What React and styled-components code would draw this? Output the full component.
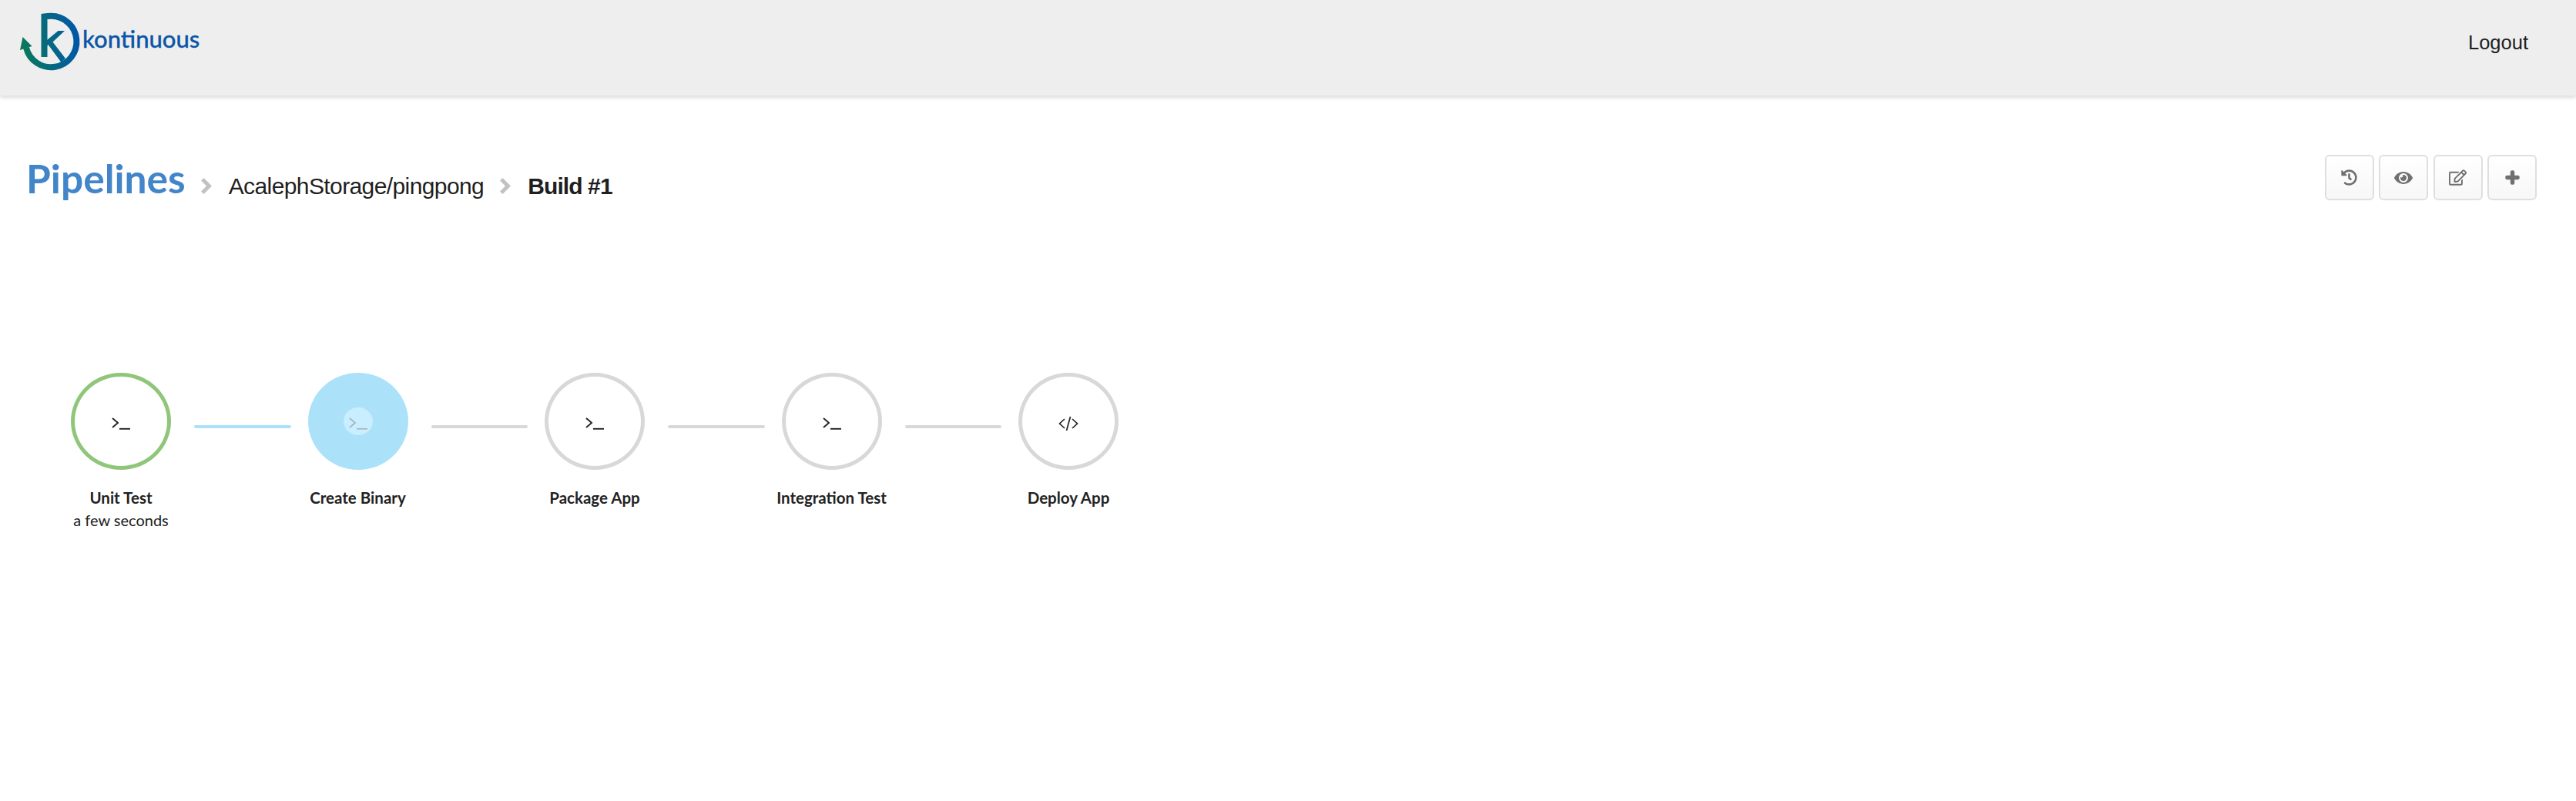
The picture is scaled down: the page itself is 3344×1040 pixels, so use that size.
import React from "react";
import styled, { createGlobalStyle } from "styled-components";
import { FaHistory, FaEye, FaRegEdit, FaPlus } from "react-icons/fa";

const GlobalStyle = createGlobalStyle`
    html, body {
        margin: 0;
        padding: 0;
        background: #fff;
        font-family: "Liberation Sans", Arial, sans-serif;
    }
`;

const Logo = () => (
    <LogoLink>
        <svg width="84" height="80" viewBox="24 14 84 80">
            <defs>
                <linearGradient id="logoFill" gradientUnits="userSpaceOnUse" x1="26" y1="60" x2="103" y2="50">
                    <stop offset="0" stopColor="#0b7a58" />
                    <stop offset="1" stopColor="#0056aa" />
                </linearGradient>
            </defs>
            <path
                d="M57.5 74V21.5C61 21 63 20.8 66 20.8A33.2 33.2 0 1 1 34 62"
                fill="none"
                stroke="url(#logoFill)"
                strokeWidth="8"
            />
            <path d="M29.5 48L26 65L41.5 60Z" fill="url(#logoFill)" />
            <path d="M61 52L75.5 40H84L68.5 54.5L85 76L79.5 81L62.5 58L61 59.5Z" fill="url(#logoFill)" />
        </svg>
        <LogoText>kontinuous</LogoText>
    </LogoLink>
);

const Chevron = () => (
    <ChevronIcon width="14" height="21" viewBox="0 0 14 21">
        <path d="M0 3.5L3.5 0L14 10.5L3.5 21L0 17.5L7 10.5Z" fill="#c2c2c2" />
    </ChevronIcon>
);

const TerminalIcon = ({ color }) => (
    <GlyphIcon width="24" height="16" viewBox="0 0 24 16" fill="none" stroke={color} strokeWidth="1.9">
        <path d="M1 1L8 7L1 13" />
        <path d="M10 14.8H24" />
    </GlyphIcon>
);

const CodeIcon = () => (
    <GlyphIcon width="26" height="20" viewBox="0 0 26 20" fill="none" stroke="#222" strokeWidth="1.7">
        <path d="M8 4L1.5 10L8 16" />
        <path d="M15.5 1L10.5 19" />
        <path d="M18 4L24.5 10L18 16" />
    </GlyphIcon>
);

const stages = [
    { name: "Unit Test", time: "a few seconds", status: "success", type: "terminal" },
    { name: "Create Binary", status: "running", type: "terminal" },
    { name: "Package App", status: "waiting", type: "terminal" },
    { name: "Integration Test", status: "waiting", type: "terminal" },
    { name: "Deploy App", status: "waiting", type: "code" },
];

const App = () => {
    return (
        <>
            <GlobalStyle />
            <Header>
                <Logo />
                <Logout>Logout</Logout>
            </Header>
            <TitleRow>
                <Crumbs>
                    <PageTitle>Pipelines</PageTitle>
                    <Chevron />
                    <Crumb>AcalephStorage/pingpong</Crumb>
                    <Chevron />
                    <Crumb $current>Build #1</Crumb>
                </Crumbs>
                <Actions>
                    <ActionButton $size={21}>
                        <FaHistory />
                    </ActionButton>
                    <ActionButton $size={24}>
                        <FaEye />
                    </ActionButton>
                    <ActionButton $size={23}>
                        <FaRegEdit />
                    </ActionButton>
                    <ActionButton $size={19} $heavy>
                        <FaPlus />
                    </ActionButton>
                </Actions>
            </TitleRow>
            <Stages>
                {stages.map((stage, index) => (
                    <React.Fragment key={stage.name}>
                        {index > 0 && <Connector $active={index === 1} />}
                        <Stage>
                            <StageCircle $status={stage.status}>
                                {stage.status === "running" ? (
                                    <Pulse>
                                        <TerminalIcon color="#aab8c0" />
                                    </Pulse>
                                ) : stage.type === "code" ? (
                                    <CodeIcon />
                                ) : (
                                    <TerminalIcon color="#222" />
                                )}
                            </StageCircle>
                            <StageName>{stage.name}</StageName>
                            {stage.time && <StageTime>{stage.time}</StageTime>}
                        </Stage>
                    </React.Fragment>
                ))}
            </Stages>
        </>
    );
};

const Header = styled.header`
    height: 124px;
    box-sizing: border-box;
    padding: 0 62px 0 24px;
    display: flex;
    align-items: flex-start;
    justify-content: space-between;
    background: #eeeeee;
    box-shadow: 0 3px 5px rgba(0, 0, 0, 0.14);
`;

const LogoLink = styled.a`
    display: flex;
    align-items: flex-start;
    margin-top: 14px;
`;

const LogoText = styled.span`
    margin-top: 17px;
    margin-left: -1px;
    font-family: Lato, sans-serif;
    font-size: 31px;
    font-weight: 500;
    line-height: 38px;
    color: #0b55a6;
    -webkit-text-stroke: 0.3px #0b55a6;
`;

const Logout = styled.a`
    margin-top: 39px;
    font-size: 25.5px;
    line-height: 32px;
    color: #1f1f1f;
`;

const TitleRow = styled.div`
    display: flex;
    align-items: flex-start;
    justify-content: space-between;
    padding: 77px 51px 0 34px;
`;

const Crumbs = styled.div`
    display: flex;
    align-items: center;
    height: 59px;
`;

const PageTitle = styled.h1`
    margin: 2px 20px 0 0;
    font-family: Lato, sans-serif;
    font-size: 51.5px;
    font-weight: 700;
    line-height: 59px;
    color: #4285c8;
`;

const ChevronIcon = styled.svg`
    flex-shrink: 0;
    margin-top: 22px;
`;

const Crumb = styled.span`
    margin: 22px 21px 0 22px;
    font-size: 30px;
    font-weight: ${(props) => (props.$current ? 700 : 400)};
    letter-spacing: ${(props) => (props.$current ? "-0.9px" : "-0.6px")};
    line-height: 36px;
    color: #1f1f1f;
`;

const Actions = styled.div`
    display: flex;
    gap: 6.5px;
`;

const ActionButton = styled.button`
    width: 64px;
    height: 59px;
    padding: 0;
    display: flex;
    align-items: center;
    justify-content: center;
    border: 2px solid #dfdfdf;
    border-radius: 6px;
    background: linear-gradient(#ffffff, #f7f7f7);
    color: #707070;
    font-size: ${(props) => props.$size}px;

    svg {
        stroke-width: ${(props) => (props.$heavy ? 50 : 0)}px;
    }
`;

const Stages = styled.div`
    display: flex;
    align-items: flex-start;
    padding: 224px 0 0 92px;
`;

const Stage = styled.div`
    width: 130px;
    flex-shrink: 0;
    display: flex;
    flex-direction: column;
    align-items: center;
`;

const statusStyles = {
    success: "border: 5px solid #8fc67a; background: #fff;",
    running: "border: 5px solid #abe2f9; background: #abe2f9;",
    waiting: "border: 5px solid #d8d8d8; background: #fff;",
};

const StageCircle = styled.div`
    width: 130px;
    height: 126px;
    box-sizing: border-box;
    display: flex;
    align-items: center;
    justify-content: center;
    border-radius: 50%;
    ${(props) => statusStyles[props.$status]}
`;

const Pulse = styled.div`
    width: 38px;
    height: 36px;
    display: flex;
    align-items: center;
    justify-content: center;
    border-radius: 50%;
    background: #c9eeff;
`;

const GlyphIcon = styled.svg`
    flex-shrink: 0;
    margin-top: 5px;
`;

const StageName = styled.div`
    margin-top: 22px;
    font-family: Lato, sans-serif;
    font-size: 20.5px;
    font-weight: 700;
    line-height: 28px;
    color: #222;
    white-space: nowrap;
`;

const StageTime = styled.div`
    font-family: Lato, sans-serif;
    font-size: 20px;
    line-height: 30px;
    color: #222;
    white-space: nowrap;
`;

const Connector = styled.div`
    width: 125.5px;
    height: 4px;
    flex-shrink: 0;
    margin: 68px 22px 0 30px;
    border-radius: 2px;
    background: ${(props) => (props.$active ? "#abe2f9" : "#d8d8d8")};
`;

export default App;
